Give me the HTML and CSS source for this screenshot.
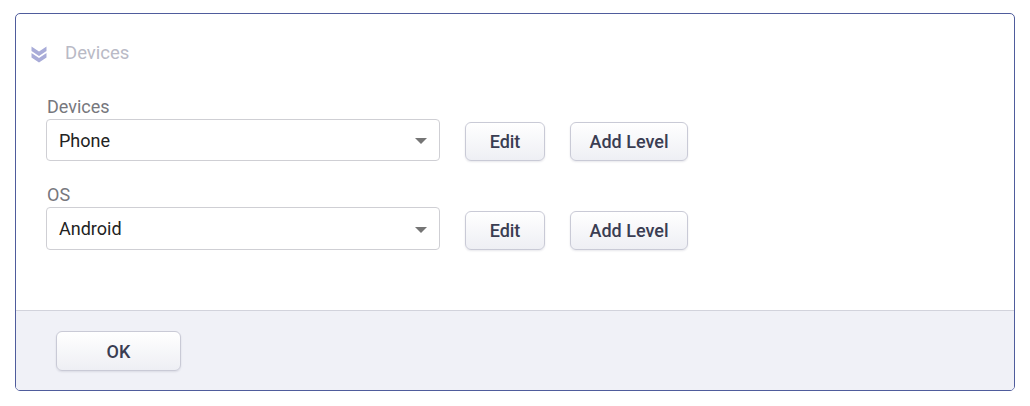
FILE: index.html
```html
<!DOCTYPE html>
<html>
<head>
<meta charset="utf-8">
<link rel="stylesheet" href="styles.css">
</head>
<body>
<div class="panel">
  <div class="panel-head">
    <svg class="chev" width="16" height="17" viewBox="0 0 16 17" aria-hidden="true">
      <path d="M0.5 0.5 L8 5.5 L15.5 0.5 L15.5 5 L8 10 L0.5 5 Z" fill="#a9acd8"/>
      <path d="M0.5 7 L8 12 L15.5 7 L15.5 11.5 L8 16.5 L0.5 11.5 Z" fill="#a9acd8"/>
    </svg>
    <span class="head-title">Devices</span>
  </div>
  <div class="panel-body">
    <div class="field">
      <div class="label">Devices</div>
      <div class="row">
        <div class="select"><span>Phone</span><span class="caret"></span></div>
        <button class="btn btn-edit">Edit</button>
        <button class="btn btn-add">Add Level</button>
      </div>
    </div>
    <div class="field">
      <div class="label">OS</div>
      <div class="row">
        <div class="select tall"><span>Android</span><span class="caret"></span></div>
        <button class="btn btn-edit">Edit</button>
        <button class="btn btn-add">Add Level</button>
      </div>
    </div>
  </div>
  <div class="panel-foot">
    <button class="btn btn-ok">OK</button>
  </div>
</div>
</body>
</html>
```
FILE: styles.css
```css
html, body {
  margin: 0;
  padding: 0;
  background: #ffffff;
  font-family: Roboto, "Liberation Sans", Arial, sans-serif;
}
body {
  padding-top: 13px;
}
.panel {
  margin: 0 0 0 15px;
  width: 998px;
  height: 376px;
  border: 1px solid #4f5c9c;
  border-radius: 5px;
  display: flex;
  flex-direction: column;
  overflow: hidden;
  background: #fff;
}
.panel-head {
  display: flex;
  align-items: center;
  padding: 27px 0 0 15px;
  height: 24px;
  flex: none;
}
.chev {
  display: block;
  margin: 3px 18px 0 0;
}
.head-title {
  font-size: 18.5px;
  color: #b9bac6;
  line-height: 24px;
}
.panel-body {
  flex: 1;
  padding: 31px 0 0 30px;
}
.field {
  margin-bottom: 23px;
}
.label {
  font-size: 18px;
  line-height: 21px;
  color: #77777d;
  padding-left: 1px;
  margin-bottom: 2px;
}
.row {
  display: flex;
  align-items: center;
  gap: 25px;
}
.select {
  box-sizing: border-box;
  width: 394px;
  height: 42px;
  border: 1px solid #cfcfd4;
  border-radius: 4px;
  display: flex;
  align-items: center;
  justify-content: space-between;
  padding: 0 12px 0 12px;
  font-size: 18px;
  color: #222;
}
.select.tall {
  height: 43px;
}
.caret {
  width: 0;
  height: 0;
  border-left: 6px solid transparent;
  border-right: 6px solid transparent;
  border-top: 6px solid #757575;
  margin-top: 2px;
}
.btn {
  box-sizing: border-box;
  height: 39px;
  margin-top: 3px;
  border: 1px solid #c9cad6;
  border-radius: 6px;
  background: linear-gradient(#ffffff, #eeeff4);
  box-shadow: 0 1px 2px rgba(60, 60, 90, 0.12);
  font-family: Roboto, "Liberation Sans", Arial, sans-serif;
  font-size: 18px;
  font-weight: 500;
  color: #3a3d52;
  padding: 0;
  cursor: pointer;
}
.btn-edit {
  width: 80px;
}
.btn-add {
  width: 118px;
}
.panel-foot {
  flex: none;
  height: 80px;
  border-top: 1px solid #d2d3dc;
  background: #f0f1f7;
  padding: 20px 0 0 40px;
  box-sizing: border-box;
}
.btn-ok {
  width: 125px;
  height: 40px;
  margin-top: 0;
}
```
